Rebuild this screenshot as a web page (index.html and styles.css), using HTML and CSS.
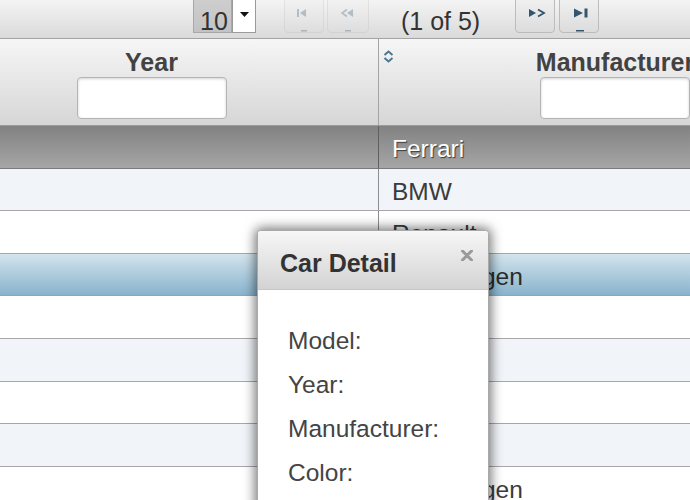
FILE: index.html
```html
<!DOCTYPE html>
<html>
<head>
<meta charset="utf-8">
<link rel="stylesheet" href="styles.css">
</head>
<body>
<div class="page">
  <div class="paginator">
    <div class="dd">
      <span class="dd-label">10</span>
      <span class="dd-trigger"><svg width="9" height="5" viewBox="0 0 9 5"><path d="M0 0H9L4.5 5Z" fill="#111"/></svg></span>
    </div>
    <span class="pg-btn disabled first"><svg width="20" height="28" viewBox="0 0 20 28"><rect x="0" y="5" width="2" height="8" fill="#34556e"/><path d="M9 5L3 9L9 13Z" fill="#34556e"/><rect x="4" y="26" width="6" height="1.5" fill="#34556e"/></svg></span>
    <span class="pg-btn disabled prev"><svg width="20" height="28" viewBox="0 0 20 28"><path d="M6 5.5L1 9L6 12.5" fill="none" stroke="#34556e" stroke-width="1.6"/><path d="M12 5L6 9L12 13Z" fill="#34556e"/><rect x="4" y="26" width="6" height="1.5" fill="#34556e"/></svg></span>
    <span class="pg-current">(1 of 5)</span>
    <span class="pg-btn next"><svg width="20" height="28" viewBox="0 0 20 28"><path d="M0 5L7 9L0 13Z" fill="#34556e"/><path d="M9 5.5L15 9L9 12.5" fill="none" stroke="#34556e" stroke-width="1.8"/></svg></span>
    <span class="pg-btn last"><svg width="20" height="28" viewBox="0 0 20 28"><path d="M0 4.5L9 9L0 13.5Z" fill="#34556e"/><rect x="10.5" y="4.5" width="3" height="9" fill="#34556e"/><rect x="2" y="26" width="8" height="1.5" fill="#34556e"/></svg></span>
  </div>

  <div class="table">
    <div class="row thead">
      <div class="th">
        <span class="th-title">Year</span>
        <input class="filter" type="text">
      </div>
      <div class="th">
        <span class="sort"><svg width="11" height="13" viewBox="0 0 11 13"><path d="M1.5 5L5.5 1.5L9.5 5M1.5 8L5.5 11.5L9.5 8" fill="none" stroke="#4e7591" stroke-width="2"/></svg></span>
        <span class="th-title">Manufacturer</span>
        <input class="filter" type="text">
      </div>
    </div>
    <div class="row tr hover"><div class="td"></div><div class="td">Ferrari</div></div>
    <div class="row tr odd"><div class="td"></div><div class="td">BMW</div></div>
    <div class="row tr"><div class="td"></div><div class="td">Renault</div></div>
    <div class="row tr selected"><div class="td"></div><div class="td">Volkswagen</div></div>
    <div class="row tr"><div class="td"></div><div class="td"></div></div>
    <div class="row tr odd"><div class="td"></div><div class="td"></div></div>
    <div class="row tr"><div class="td"></div><div class="td"></div></div>
    <div class="row tr odd"><div class="td"></div><div class="td"></div></div>
    <div class="row tr"><div class="td"></div><div class="td">Volkswagen</div></div>
  </div>

  <div class="dialog">
    <div class="dlg-head">
      <span class="dlg-title">Car Detail</span>
      <span class="dlg-close"><svg width="12" height="11" viewBox="0 0 12 11"><path d="M1.5 1L10.5 10M10.5 1L1.5 10" stroke="#9a9a9a" stroke-width="3" stroke-linecap="round"/></svg></span>
    </div>
    <div class="dlg-body">
      <div class="lbl">Model:</div>
      <div class="lbl">Year:</div>
      <div class="lbl">Manufacturer:</div>
      <div class="lbl">Color:</div>
    </div>
  </div>
</div>
</body>
</html>
```

FILE: styles.css
```css
body {
  margin: 0;
  font-family: "Liberation Sans", Arial, sans-serif;
}

.page {
  position: relative;
  width: 690px;
  height: 500px;
  overflow: hidden;
  background: #fff;
}

/* paginator */
.paginator {
  height: 38px;
  border-bottom: 1px solid #a3a3a3;
  background: linear-gradient(#f4f4f4, #dadada);
  display: flex;
  align-items: flex-start;
  padding-left: 193px;
}

.dd {
  display: flex;
  height: 37px;
  margin-top: -4px;
}

.dd-label {
  width: 39px;
  box-sizing: border-box;
  border: 1px solid #a8a8a8;
  background: linear-gradient(#cfcfcf, #c3c3c3);
  font-size: 25px;
  line-height: 28px;
  padding: 10px 0 0 6px;
  color: #333;
}

.dd-trigger {
  width: 24px;
  box-sizing: border-box;
  border: 1px solid #9b9b9b;
  background: #fff;
  display: flex;
  align-items: center;
  justify-content: center;
}

.pg-btn {
  width: 40px;
  height: 38px;
  margin-top: -5px;
  box-sizing: border-box;
  border: 1px solid #bcbcbc;
  border-radius: 0 0 4px 4px;
  background: linear-gradient(#f2f2f2, #dcdcdc);
  padding: 8px 0 0 12px;
  display: block;
}

.pg-btn svg { display: block; }

.pg-btn.disabled { opacity: 0.3; }
.pg-btn.first { margin-left: 28px; }
.pg-btn.prev { margin-left: 3px; width: 42px; padding-left: 13px; }
.pg-btn.next { margin-left: 35px; padding-left: 13px; }
.pg-btn.last { margin-left: 4px; padding-left: 14px; }

.pg-current {
  margin-left: 32px;
  font-size: 25px;
  line-height: 28px;
  padding-top: 7px;
  color: #333;
}

/* table */
.table {
  margin-left: -75px;
  width: 926px;
}

.row {
  display: grid;
  grid-template-columns: 454px 472px;
}

.thead {
  height: 87px;
  box-sizing: border-box;
  border-bottom: 1px solid #9c9c9c;
  background: linear-gradient(#f6f6f6, #d6d6d6);
}

.th {
  position: relative;
  display: flex;
  flex-direction: column;
  align-items: center;
  padding-top: 9px;
}

.th:first-child { border-right: 1px solid #a4a4a4; }

.th-title {
  font-weight: bold;
  font-size: 25px;
  line-height: 28px;
  color: #424242;
}

.sort {
  position: absolute;
  left: 4px;
  top: 11px;
}

.sort svg { display: block; }

.filter {
  width: 150px;
  height: 42px;
  box-sizing: border-box;
  margin: 1px 0 0;
  border: 1px solid #b4b4b4;
  border-radius: 4px;
  background: #fff;
  box-shadow: inset 0 1px 3px rgba(0, 0, 0, 0.18);
}

.tr {
  height: 42.6px;
  box-sizing: border-box;
  border-bottom: 1px solid #a7a7a7;
  background: #fff;
}

.tr.odd { background: #f1f4f8; }

.td {
  font-size: 24.5px;
  line-height: 28px;
  padding: 9px 0 0 13px;
  color: #3b3b3b;
  white-space: nowrap;
  overflow: hidden;
}

.td:first-child { border-right: 1px solid #8e8e8e; }

.tr.hover {
  background: linear-gradient(#828282, #a6a6a6);
  border-bottom-color: #7a7a7a;
}

.tr.hover .td {
  color: #fff;
  text-shadow: 1px 1px 1px #3a3a3a;
}

.tr.hover .td:first-child { border-right-color: #5f5f5f; }

.tr.selected {
  background: linear-gradient(#d3e4ed, #88b3cd);
  border-bottom-color: #8ea6b6;
}

.tr.selected .td { color: #2a2a2a; }

/* dialog */
.dialog {
  position: absolute;
  left: 257px;
  top: 230px;
  width: 232px;
  height: 300px;
  box-sizing: border-box;
  border: 1px solid #a9a9a9;
  border-radius: 4px 4px 0 0;
  background: #fff;
  box-shadow: 0 0 12px 2px rgba(0, 0, 0, 0.55);
}

.dlg-head {
  height: 59px;
  box-sizing: border-box;
  display: flex;
  justify-content: space-between;
  align-items: flex-start;
  padding: 18px 15px 0 22px;
  background: linear-gradient(#f7f7f7, #d3d3d3);
  border-bottom: 1px solid #c6c6c6;
  border-radius: 3px 3px 0 0;
}

.dlg-title {
  font-weight: bold;
  font-size: 25px;
  line-height: 28px;
  color: #333;
}

.dlg-close { margin-top: 1px; }
.dlg-close svg { display: block; }

.dlg-body {
  padding: 29px 0 0 30px;
}

.lbl {
  font-size: 24.5px;
  line-height: 44px;
  color: #444;
}
```
